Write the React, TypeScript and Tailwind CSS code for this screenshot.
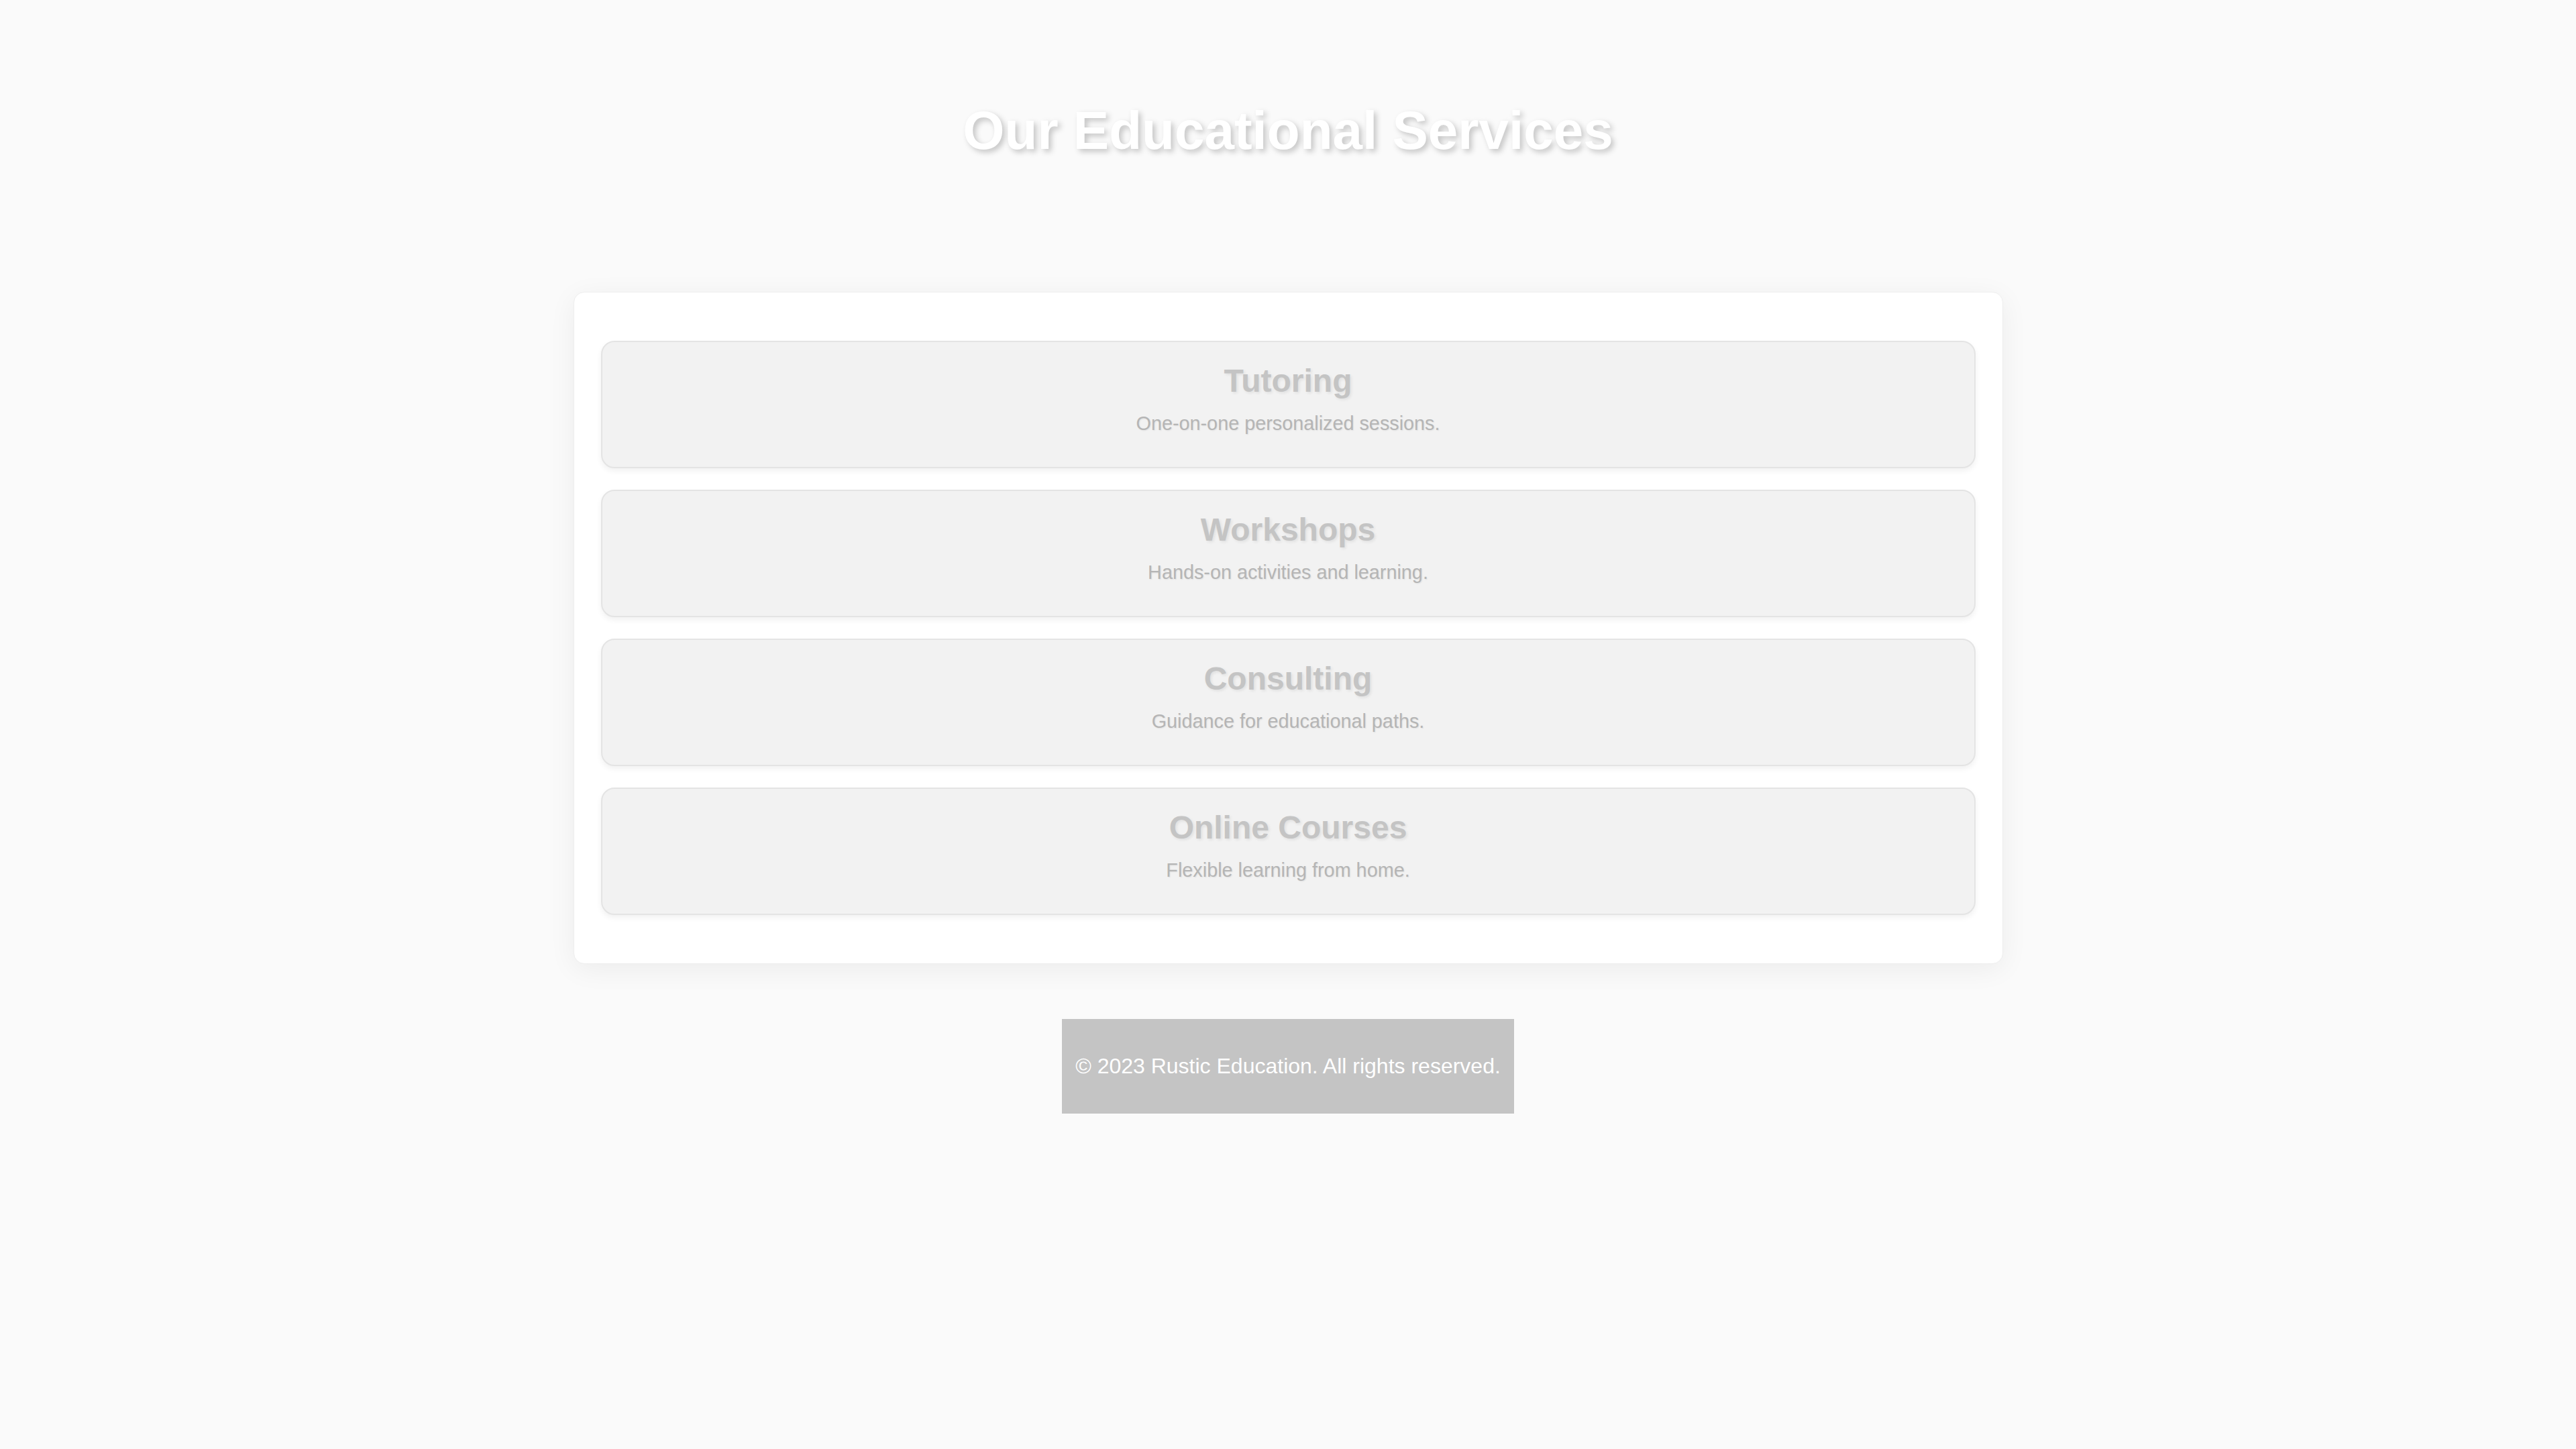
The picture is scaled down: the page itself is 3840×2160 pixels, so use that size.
const services = [
  { title: 'Tutoring', text: 'One-on-one personalized sessions.' },
  { title: 'Workshops', text: 'Hands-on activities and learning.' },
  { title: 'Consulting', text: 'Guidance for educational paths.' },
  { title: 'Online Courses', text: 'Flexible learning from home.' },
]

export default function App() {
  return (
    <div className="min-h-screen bg-[#fafafa] font-['Liberation_Sans',Arial,sans-serif]">
      {/* Header */}
      <header className="pt-[149px] pb-[194px] text-center">
        <h1 className="text-[80px] leading-[92px] font-bold text-white [text-shadow:4px_4px_8px_rgba(0,0,0,0.22)]">
          Our Educational Services
        </h1>
      </header>

      {/* Services */}
      <main className="w-[2131px] mx-auto bg-white border border-[#eeeeee] rounded-[16px] px-10 py-10 shadow-[0_8px_40px_rgba(0,0,0,0.06)]">
        {services.map((s) => (
          <div
            key={s.title}
            className="my-8 h-[190px] bg-[#f2f2f2] border-2 border-[#e4e4e4] rounded-[20px] pt-[30px] text-center shadow-[0_4px_8px_rgba(0,0,0,0.06)]"
          >
            <h3 className="text-[48px] leading-[55px] font-bold text-[#c4c4c4] [text-shadow:2px_2px_4px_rgba(0,0,0,0.08)]">
              {s.title}
            </h3>
            <p className="mt-[20px] text-[28.8px] leading-[33px] text-[#b5b5b5] [text-shadow:1px_1px_2px_rgba(0,0,0,0.08)]">
              {s.text}
            </p>
          </div>
        ))}
      </main>

      {/* Footer */}
      <footer className="flex justify-center mt-[82px]">
        <p className="bg-[#c4c4c4] text-white text-[32px] leading-[37px] px-5 py-[52px]">
          © 2023 Rustic Education. All rights reserved.
        </p>
      </footer>
    </div>
  )
}
